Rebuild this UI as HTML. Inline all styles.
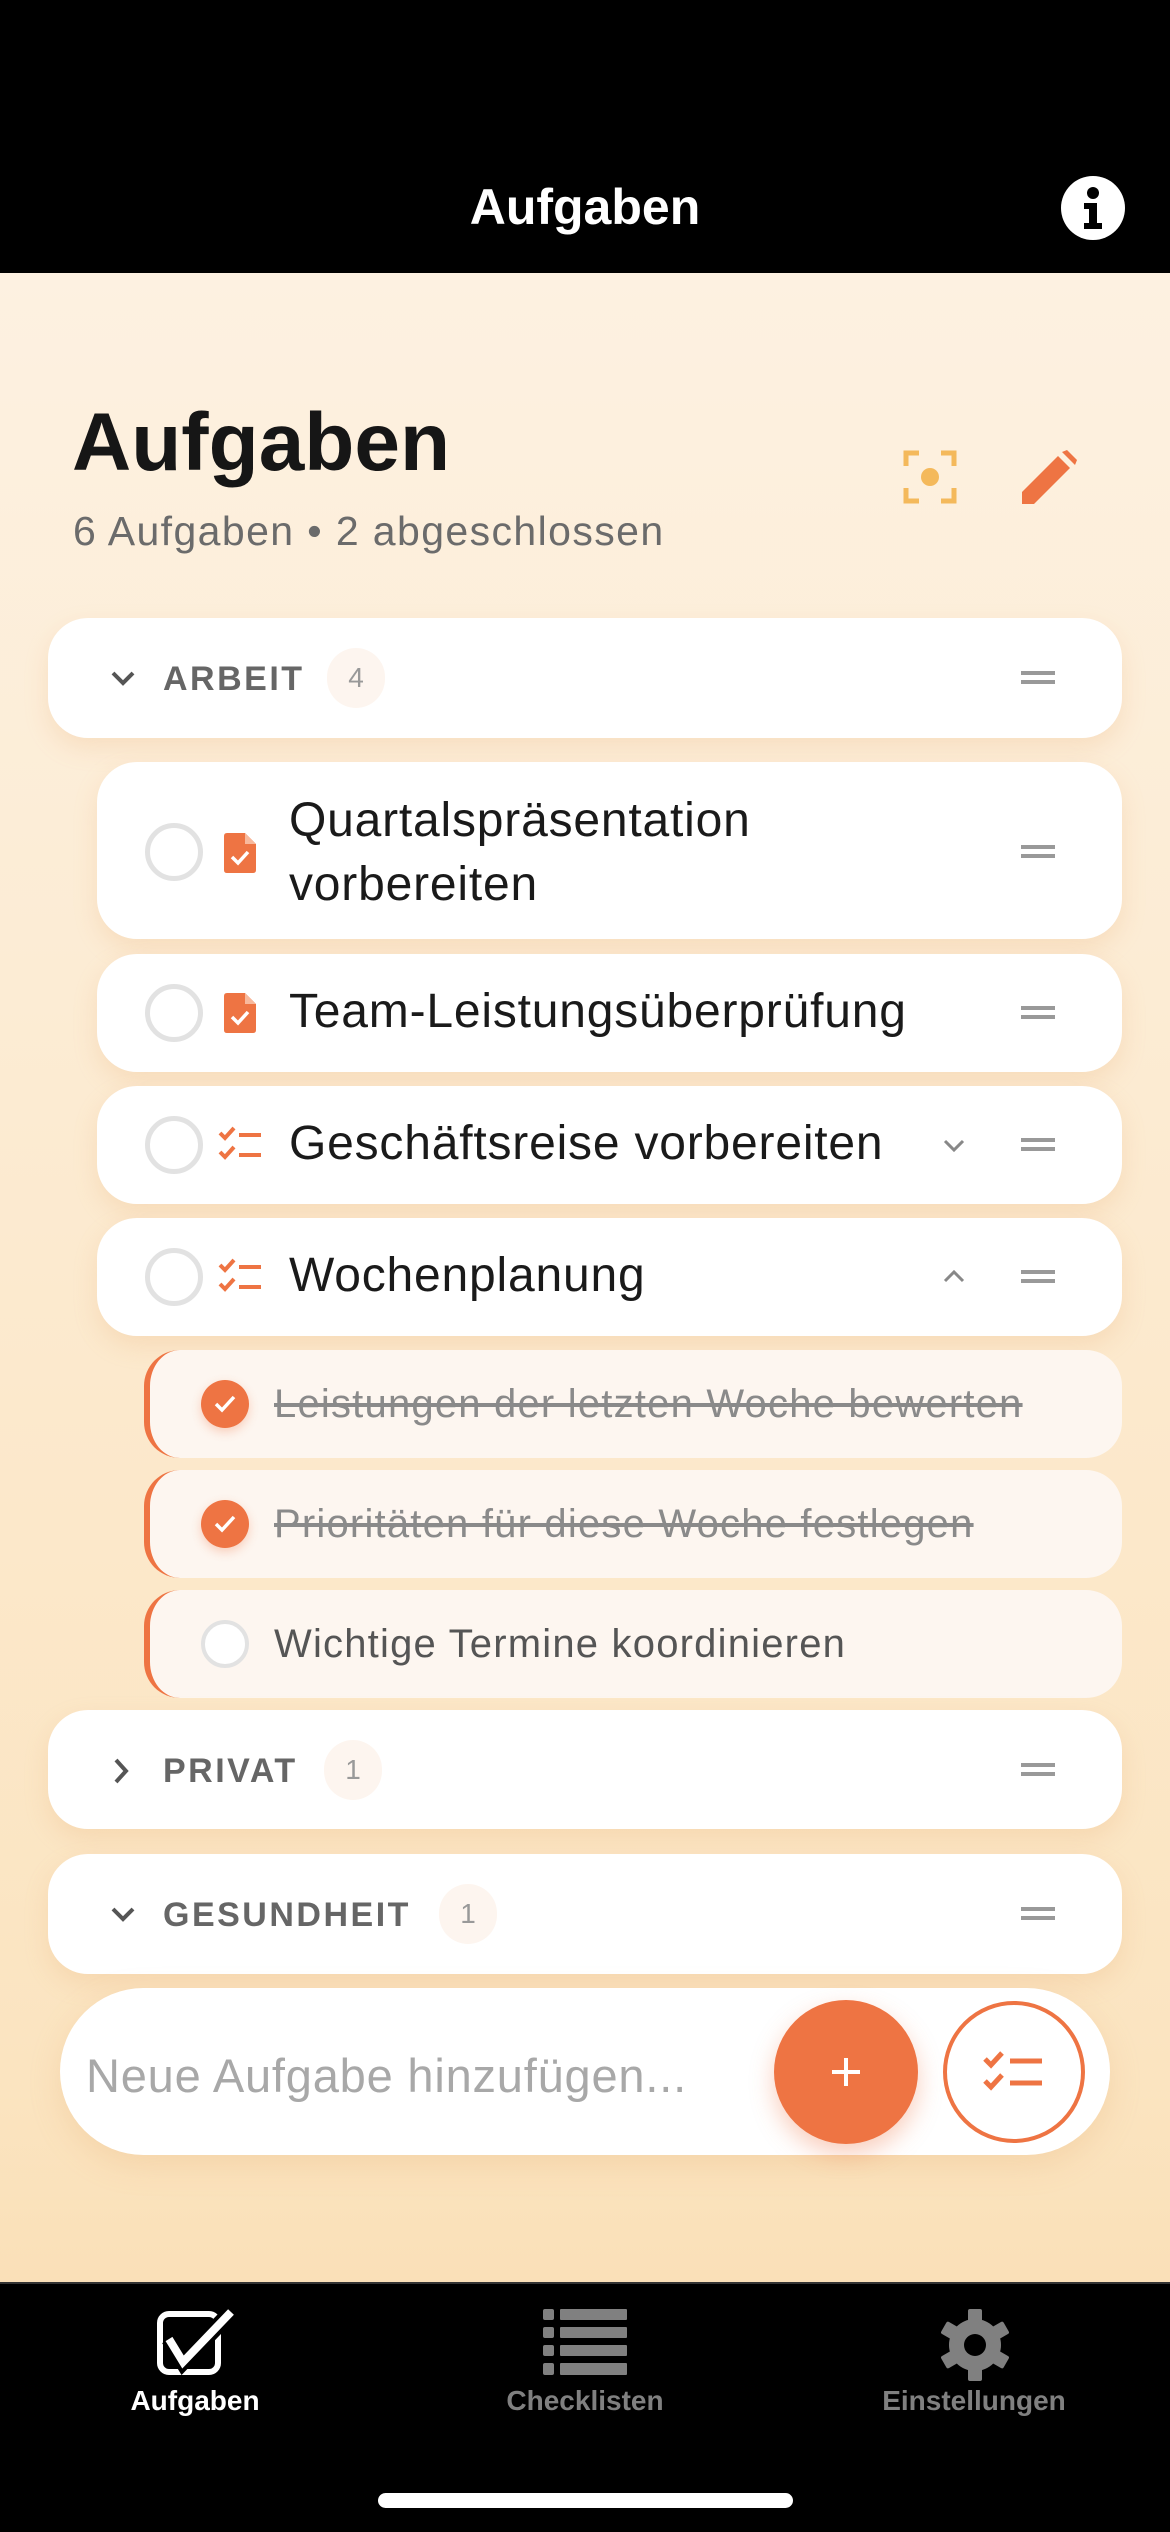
<!DOCTYPE html>
<html><head><meta charset="utf-8"><style>
*{margin:0;padding:0;box-sizing:border-box}
body{width:1170px;height:2532px;position:relative;overflow:hidden;font-family:"Liberation Sans",sans-serif;background:#000}
.bg{position:absolute;left:0;top:273px;width:1170px;height:2010px;background:linear-gradient(#fdf1e1,#fbe4c0 90%,#fae0b8)}
.abs{position:absolute}
.card{position:absolute;background:#fff;border-radius:40px;box-shadow:0 10px 24px rgba(230,170,110,.22)}
.sec{font-size:34px;font-weight:bold;color:#666;letter-spacing:2.5px}
.badge{position:absolute;width:58px;height:60px;border-radius:29px;background:#fdf5ef;color:#999;font-size:28px;text-align:center;line-height:60px}
.handle{position:absolute;width:34px;height:13px;border-top:4px solid #999;border-bottom:4px solid #999}
.cb{position:absolute;width:58px;height:58px;border-radius:50%;border:5px solid #e2e2e2;background:#fff}
.tt{position:absolute;font-size:48px;color:#1a1a1a;letter-spacing:0.8px}
.sub{position:absolute;left:144px;width:978px;height:108px;background:#fdf6f0;border-radius:36px;border-left:6px solid #ee7443}
.subt{position:absolute;left:124px;top:0;line-height:108px;font-size:40px;letter-spacing:1.2px;color:#8a8a8a}
.sc{position:absolute;left:51px;top:30px;width:48px;height:48px;border-radius:50%;background:#ee7443;box-shadow:0 4px 10px rgba(238,116,67,.3)}
.tab{position:absolute;top:2385px;font-size:28px;font-weight:bold;color:#808080;text-align:center;width:300px}
</style></head><body>
<div class="bg"></div>
<div class="abs" style="left:0;top:178px;width:1170px;text-align:center;color:#fff;font-size:50px;font-weight:bold">Aufgaben</div>
<svg class="abs" style="left:1060px;top:175px" width="66" height="66" viewBox="0 0 66 66"><circle cx="33" cy="33" r="32" fill="#fff"/><circle cx="33" cy="18" r="6" fill="#000"/><path d="M24 28h13v20h5v6H24v-6h5V34h-5z" fill="#000"/></svg>

<div class="abs" style="left:72px;top:396px;font-size:82px;font-weight:bold;color:#161616">Aufgaben</div>
<div class="abs" style="left:73px;top:508px;font-size:41px;letter-spacing:1.4px;color:#6b6b6b">6 Aufgaben • 2 abgeschlossen</div>
<svg class="abs" style="left:903px;top:450px" width="54" height="54" viewBox="0 0 54 54" fill="none" stroke="#f4b95b" stroke-width="5"><path d="M3 16V3h13M38 3h13v13M51 38v13H38M16 51H3V38"/><circle cx="27" cy="27" r="9" fill="#f4b95b" stroke="none"/></svg>
<svg class="abs" style="left:1022px;top:450px" width="55" height="54" viewBox="0 0 55 54"><path d="M0 54V42L36 6l12 12L12 54z" fill="#ee7443"/><path d="M40 2l5-2 10 10-2 5z" fill="#ee7443"/></svg>

<!-- ARBEIT -->
<div class="card" style="left:48px;top:618px;width:1074px;height:120px"></div>
<svg class="abs" style="left:110px;top:670px" width="26" height="18" viewBox="0 0 26 18"><path d="M3 3l10 10L23 3" fill="none" stroke="#555" stroke-width="4"/></svg>
<div class="abs sec" style="left:163px;top:660px">ARBEIT</div>
<div class="badge" style="left:327px;top:648px">4</div>
<div class="handle" style="left:1021px;top:671px"></div>

<!-- task1 -->
<div class="card" style="left:97px;top:762px;width:1025px;height:177px"></div>
<div class="cb" style="left:145px;top:823px"></div>
<svg class="abs" style="left:224px;top:833px" width="32" height="40" viewBox="0 0 32 40"><path d="M3 0h18l11 11v26q0 3-3 3H3q-3 0-3-3V3q0-3 3-3z" fill="#ee7443"/><path d="M21 0v11h11" fill="#f8b99c"/><path d="M8 24l6 6 10-11" fill="none" stroke="#fff" stroke-width="3.5"/></svg>
<div class="tt" style="left:289px;top:789px;line-height:64px">Quartalspräsentation<br>vorbereiten</div>
<div class="handle" style="left:1021px;top:845px"></div>

<!-- task2 -->
<div class="card" style="left:97px;top:954px;width:1025px;height:118px"></div>
<div class="cb" style="left:145px;top:984px"></div>
<svg class="abs" style="left:224px;top:993px" width="32" height="40" viewBox="0 0 32 40"><path d="M3 0h18l11 11v26q0 3-3 3H3q-3 0-3-3V3q0-3 3-3z" fill="#ee7443"/><path d="M21 0v11h11" fill="#f8b99c"/><path d="M8 24l6 6 10-11" fill="none" stroke="#fff" stroke-width="3.5"/></svg>
<div class="tt" style="left:289px;top:984px">Team-Leistungsüberprüfung</div>
<div class="handle" style="left:1021px;top:1006px"></div>

<!-- task3 -->
<div class="card" style="left:97px;top:1086px;width:1025px;height:118px"></div>
<div class="cb" style="left:145px;top:1116px"></div>
<svg class="abs" style="left:218px;top:1126px" width="44" height="38" viewBox="0 0 44 38" fill="none" stroke="#ee7443" stroke-width="4"><path d="M2 7l5 5 9-10M2 26l5 5 9-10M21 9h22M21 29h22"/></svg>
<div class="tt" style="left:289px;top:1116px">Geschäftsreise vorbereiten</div>
<svg class="abs" style="left:942px;top:1138px" width="24" height="16" viewBox="0 0 24 16"><path d="M3 3l9 9 9-9" fill="none" stroke="#888" stroke-width="3"/></svg>
<div class="handle" style="left:1021px;top:1138px"></div>

<!-- task4 -->
<div class="card" style="left:97px;top:1218px;width:1025px;height:118px"></div>
<div class="cb" style="left:145px;top:1248px"></div>
<svg class="abs" style="left:218px;top:1258px" width="44" height="38" viewBox="0 0 44 38" fill="none" stroke="#ee7443" stroke-width="4"><path d="M2 7l5 5 9-10M2 26l5 5 9-10M21 9h22M21 29h22"/></svg>
<div class="tt" style="left:289px;top:1248px">Wochenplanung</div>
<svg class="abs" style="left:942px;top:1268px" width="24" height="16" viewBox="0 0 24 16"><path d="M3 13l9-9 9 9" fill="none" stroke="#888" stroke-width="3"/></svg>
<div class="handle" style="left:1021px;top:1270px"></div>

<!-- subtasks -->
<div class="sub" style="top:1350px"><div class="sc"><svg width="48" height="48" viewBox="0 0 48 48"><path d="M15 24l6 6 12-13" fill="none" stroke="#fff" stroke-width="3.5"/></svg></div><div class="subt" style="text-decoration:line-through">Leistungen der letzten Woche bewerten</div></div>
<div class="sub" style="top:1470px"><div class="sc"><svg width="48" height="48" viewBox="0 0 48 48"><path d="M15 24l6 6 12-13" fill="none" stroke="#fff" stroke-width="3.5"/></svg></div><div class="subt" style="text-decoration:line-through">Prioritäten für diese Woche festlegen</div></div>
<div class="sub" style="top:1590px"><div class="sc" style="background:#fff;border:4px solid #e2e2e2;box-shadow:none"></div><div class="subt" style="color:#555">Wichtige Termine koordinieren</div></div>

<!-- PRIVAT -->
<div class="card" style="left:48px;top:1710px;width:1074px;height:119px"></div>
<svg class="abs" style="left:113px;top:1757px" width="18" height="28" viewBox="0 0 18 28"><path d="M3 3l10 11L3 25" fill="none" stroke="#555" stroke-width="4"/></svg>
<div class="abs sec" style="left:163px;top:1752px">PRIVAT</div>
<div class="badge" style="left:324px;top:1740px">1</div>
<div class="handle" style="left:1021px;top:1763px"></div>

<!-- GESUNDHEIT -->
<div class="card" style="left:48px;top:1854px;width:1074px;height:120px"></div>
<svg class="abs" style="left:110px;top:1906px" width="26" height="18" viewBox="0 0 26 18"><path d="M3 3l10 10L23 3" fill="none" stroke="#555" stroke-width="4"/></svg>
<div class="abs sec" style="left:163px;top:1896px">GESUNDHEIT</div>
<div class="badge" style="left:439px;top:1884px">1</div>
<div class="handle" style="left:1021px;top:1907px"></div>

<!-- input -->
<div class="abs" style="left:60px;top:1988px;width:1050px;height:167px;border-radius:84px;background:#fff;box-shadow:0 10px 30px rgba(230,170,110,.25)"></div>
<div class="abs" style="left:86px;top:2048px;font-size:47px;letter-spacing:0.8px;color:#a8a8a8">Neue Aufgabe hinzufügen...</div>
<div class="abs" style="left:774px;top:2000px;width:144px;height:144px;border-radius:50%;background:#ee7443;box-shadow:0 10px 24px rgba(238,116,67,.35)"></div>
<svg class="abs" style="left:826px;top:2052px" width="40" height="40" viewBox="0 0 40 40"><path d="M20 6v28M6 20h28" stroke="#fff" stroke-width="4"/></svg>
<div class="abs" style="left:943px;top:2001px;width:142px;height:142px;border-radius:50%;background:#fff;border:4px solid #ee7443"></div>
<svg class="abs" style="left:983px;top:2050px" width="62" height="44" viewBox="0 0 62 44" fill="none" stroke="#ee7443" stroke-width="5"><path d="M2 9l6 6 11-12M2 31l6 6 11-12M27 11h32M27 33h32"/></svg>

<!-- tab bar -->
<div class="abs" style="left:0;top:2282px;width:1170px;height:2px;background:#333"></div>
<svg class="abs" style="left:157px;top:2309px" width="78" height="66" viewBox="0 0 78 66"><rect x="3" y="5" width="58" height="58" rx="9" fill="none" stroke="#fff" stroke-width="6"/><path d="M12 30l14 23L74 3" fill="none" stroke="#000" stroke-width="16"/><path d="M12 30l14 23L74 3" fill="none" stroke="#fff" stroke-width="8"/></svg>
<svg class="abs" style="left:543px;top:2309px" width="84" height="66" viewBox="0 0 84 66" fill="#808080"><rect x="0" y="0" width="11" height="11" rx="2"/><rect x="17" y="0" width="67" height="11" rx="1"/><rect x="0" y="18" width="11" height="11" rx="2"/><rect x="17" y="18" width="67" height="11" rx="1"/><rect x="0" y="36" width="11" height="11" rx="2"/><rect x="17" y="36" width="67" height="11" rx="1"/><rect x="0" y="54" width="11" height="12" rx="2"/><rect x="17" y="54" width="67" height="12" rx="1"/></svg>
<svg class="abs" style="left:939px;top:2309px" width="72" height="72" viewBox="0 0 72 72"><g fill="#808080"><circle cx="36" cy="36" r="26"/><rect x="29" y="0" width="14" height="72" rx="2"/><rect x="29" y="0" width="14" height="72" rx="2" transform="rotate(60 36 36)"/><rect x="29" y="0" width="14" height="72" rx="2" transform="rotate(120 36 36)"/></g><circle cx="36" cy="36" r="11" fill="#000"/></svg>
<div class="tab" style="left:45px;color:#fff">Aufgaben</div>
<div class="tab" style="left:435px">Checklisten</div>
<div class="tab" style="left:824px">Einstellungen</div>
<div class="abs" style="left:378px;top:2493px;width:415px;height:15px;border-radius:8px;background:#fff"></div>
</body></html>
